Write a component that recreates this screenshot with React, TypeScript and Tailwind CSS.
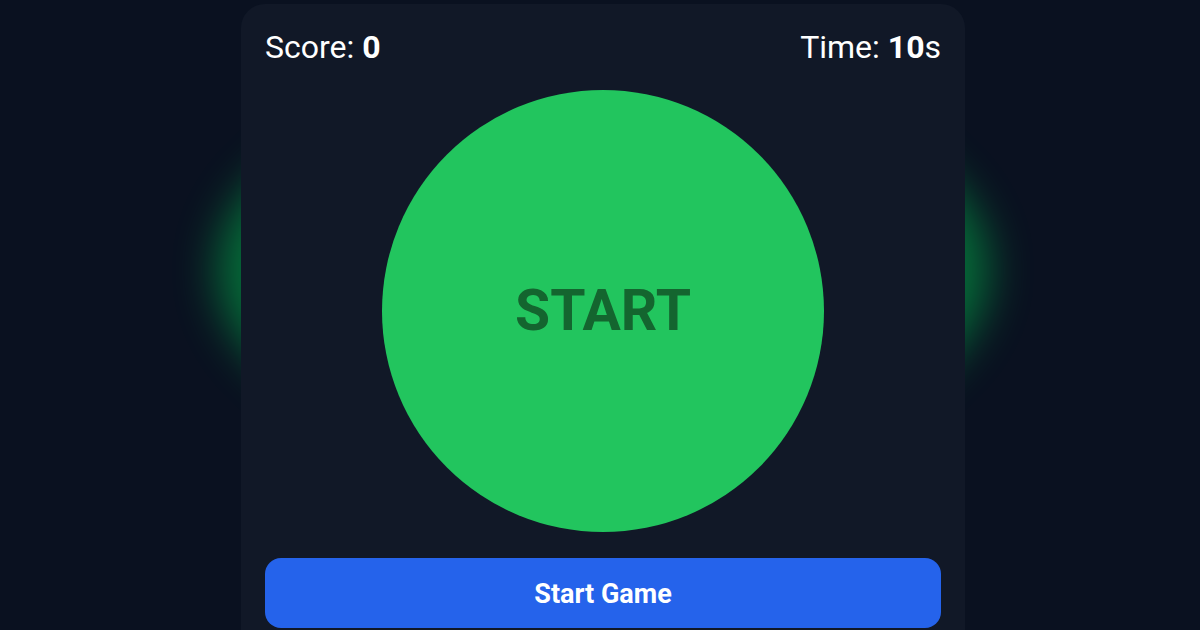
import { useState } from 'react';

export default function App() {
  const [score] = useState(0);
  const [time] = useState(10);

  return (
    <div
      className="relative min-h-screen h-[630px] overflow-hidden bg-[#0a1120]"
      style={{ fontFamily: 'Roboto, "Noto Sans", sans-serif' }}
    >
      {/* green glow behind the card */}
      <div className="absolute left-[218px] top-[70px] h-[400px] w-[770px] rounded-[50%] bg-green-500 opacity-50 blur-[22px]" />

      <div className="relative ml-[241px] mt-[4px] h-[700px] w-[724px] rounded-3xl bg-[#111827] px-6 pt-[25px]">
        <div className="flex items-center justify-between text-[32px] leading-9 text-white">
          <div>
            Score: <span className="font-bold">{score}</span>
          </div>
          <div>
            Time: <span className="font-bold">{time}</span>s
          </div>
        </div>

        <div className="mt-[25px] flex justify-center">
          <button className="flex h-[442px] w-[442px] items-center justify-center rounded-full bg-[#22c55e]">
            <span className="text-[57px] font-bold text-[#14652f]">START</span>
          </button>
        </div>

        <button className="mt-[26px] h-[70px] w-full rounded-2xl bg-[#2563eb] pt-[3px] text-[27px] font-bold text-white">
          Start Game
        </button>
      </div>
    </div>
  );
}
